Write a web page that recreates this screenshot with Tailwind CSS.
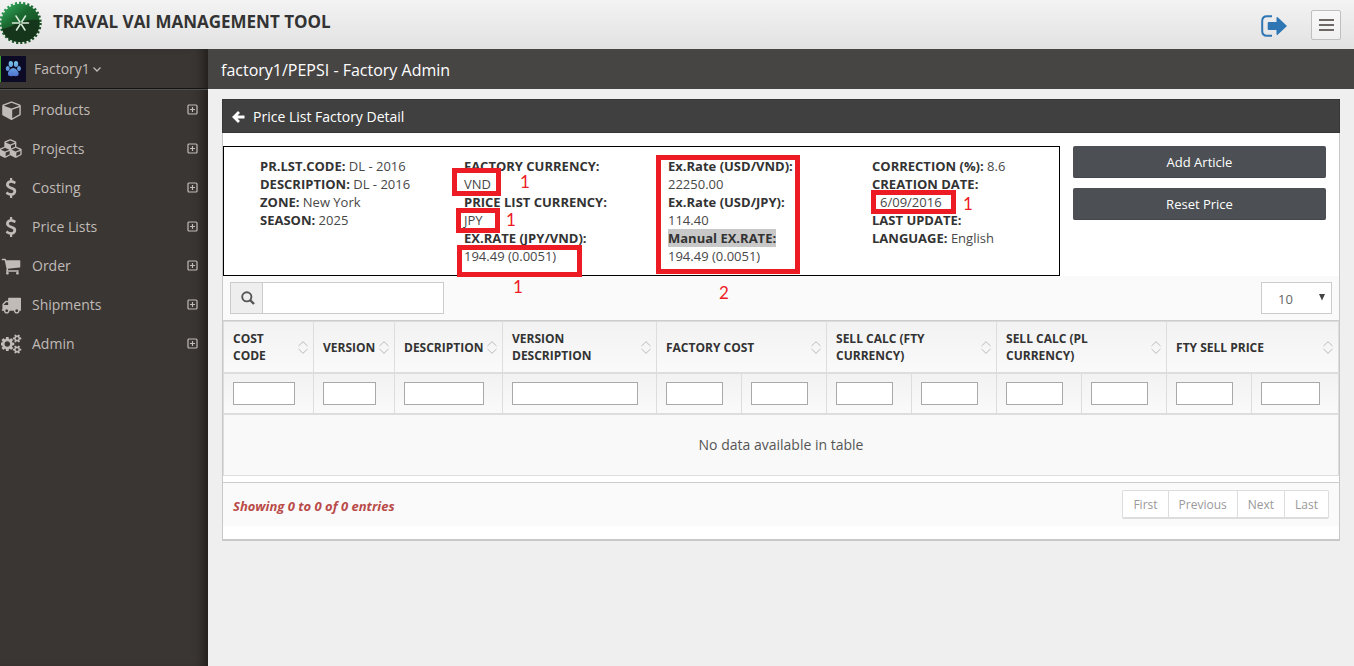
<!DOCTYPE html>
<html lang="en">
<head>
<meta charset="utf-8">
<title>Traval Vai Management Tool</title>
<script src="https://cdn.jsdelivr.net/npm/@tailwindcss/browser@4"></script>
</head>
<body class="flex min-h-screen flex-col bg-[#efefef] font-['Open_Sans','Noto_Sans',sans-serif] text-[13px] leading-[18px] text-[#333]">

<svg class="hidden" aria-hidden="true">
  <symbol id="plus" viewBox="0 0 11 11"><rect x="1" y="1" width="9" height="9" rx="1" fill="none" stroke="currentColor" stroke-width="1.200"/><path d="M3 5.500h5M5.500 3v5" stroke="currentColor" stroke-width="1.200"/></symbol>
  <symbol id="sort" viewBox="0 0 10 13"><path d="M.5 5L5 .7 9.500 5M.5 8L5 12.300 9.500 8" fill="none" stroke="#bbb"/></symbol>
  <symbol id="usd" viewBox="384 0 1024 1792"><path fill="currentColor" d="M1362 1185q0 153-99.500 263.500t-258.500 136.500v175q0 14-9 23t-23 9h-135q-13 0-22.500-9.500t-9.500-22.500v-175q-66-9-127.500-31t-101.500-44.500-74-48-46.500-37.500-17.500-18q-17-21-2-41l103-135q7-10 23-12 15-2 24 9l2 2q113 99 243 125 37 8 74 8 81 0 142.500-43t61.500-122q0-28-15-53t-33.500-42-58.500-37.500-66-32-80-32.500q-39-16-61.500-25t-61.500-26.500-62.500-31-56.500-35.500-53.500-42.500-43.500-49-35.500-58-21-66.500-8.500-78q0-138 98-242t255-134v-180q0-13 9.500-22.500t22.500-9.500h135q14 0 23 9t9 23v176q57 6 110.500 23t87 33.500 63.500 37.500 39 29 15 14q17 18 5 38l-81 146q-8 15-23 16-14 3-27-7-3-3-14.500-12t-39-26.500-58.500-32-74.500-26-85.500-11.500q-95 0-155 43t-60 111q0 26 8.500 48t29.500 41.500 39.500 33 56 31 60.500 27 70 27.500q53 20 81 31.500t76 35 75.500 42.500 62 50 53 63.500 31.500 76.500 13 94z"/></symbol>
</svg>

<header class="flex h-[49px] items-center justify-between bg-linear-to-b from-[#f3f3f3] to-[#e2e2e2] pr-[13px]">
  <div class="flex items-center gap-[11px] pb-[6px]">
    <svg class="h-[44px] w-[42px]" viewBox="0 0 42 44">
      <defs><linearGradient id="disk" gradientUnits="userSpaceOnUse" x1="5" y1="3" x2="32" y2="40"><stop offset="0" stop-color="#34b062"/><stop offset=".4" stop-color="#1b6a31"/><stop offset="1" stop-color="#14451d"/></linearGradient></defs>
      <circle cx="20.500" cy="23" r="19.300" fill="url(#disk)"/>
      <circle cx="20.500" cy="23" r="19.700" fill="none" stroke="url(#disk)" stroke-width="3" stroke-dasharray="2.100 2.026"/>
      <path d="M2 29C12 28 20 18 39 20C41 33 31 42 20 42C11 42 4 37 2 29Z" fill="#15361a"/>
      <path d="M12.500 23h16M16 16l9 14M25.500 16l-9 14" stroke="#d6ead8" stroke-width="1.500" stroke-linecap="round"/>
      <circle cx="20.700" cy="23" r="1.200" fill="#5c8f63"/>
    </svg>
    <h1 class="text-[17px] leading-6 font-bold text-[#333]">TRAVAL VAI MANAGEMENT TOOL</h1>
  </div>
  <div class="flex items-center gap-6">
    <a href="#" aria-label="Sign out" class="pt-[2px]"><svg class="h-[22px] w-[26px]" viewBox="0 0 26 22"><path d="M11 1.200H6Q1.200 1.200 1.200 6v10Q1.200 20.800 6 20.800h5" fill="none" stroke="#2f76b5" stroke-width="2"/><path d="M7.500 7h8V2.400q.3-.8 1.200-.2l8.800 8.200q.6.6 0 1.200l-8.800 8.200q-.9.6-1.200-.2V15h-8q-.8 0-.8-.8V7.800q0-.8.8-.8z" fill="#2f76b5"/></svg></a>
    <button type="button" aria-label="Collapse menu" class="flex size-[30px] items-center justify-center rounded-[2px] border border-[#bfbfbf] bg-linear-to-b from-[#f8f8f8] to-[#f0f0f0]"><svg class="h-3 w-[15px]" viewBox="0 0 15 12"><path d="M0 1h15M0 6h15M0 11h15" stroke="#6e6866" stroke-width="2"/></svg></button>
  </div>
</header>

<div class="flex flex-1">
  <aside class="w-[208px] shrink-0 bg-[#3a3633] text-[14px] text-[#c0bbb7] shadow-[inset_-12px_0_12px_-8px_#1f1c1a]">
    <a href="#" class="flex h-[41px] items-center border-b border-[#525151] shadow-[inset_0_-1px_0_#141312]">
      <svg class="size-[26px]" viewBox="0 0 26 26"><defs><linearGradient id="paw" x1="0" y1="0" x2="0" y2="26" gradientUnits="userSpaceOnUse"><stop offset=".2" stop-color="#77c4ea"/><stop offset=".8" stop-color="#4d6fd0"/></linearGradient></defs><path d="M0 0h26v26H0z" fill="#0d0a26"/><path d="M0 0h1v26H0z" fill="#3ba32c"/><g fill="url(#paw)"><ellipse cx="10.800" cy="8" rx="2.200" ry="3"/><ellipse cx="16" cy="8" rx="2.200" ry="3"/><ellipse cx="7.700" cy="12.500" rx="1.900" ry="2.500"/><ellipse cx="19" cy="12.500" rx="1.900" ry="2.500"/><path d="M13.300 12c2.500 0 5.400 3.400 5.400 5.700 0 3-3 2.400-5.400 2.400s-5.400.6-5.400-2.400c0-2.300 2.900-5.700 5.400-5.700z"/></g></svg>
      <span class="ml-2">Factory1</span>
      <svg class="ml-[3px] h-[5px] w-2" viewBox="0 0 8 5"><path d="M.5.5L4 4 7.500.5" fill="none" stroke="currentColor" stroke-width="1.300"/></svg>
    </a>
    <nav class="flex flex-col">
      <a href="#" class="flex h-[39px] items-center pr-[10px]"><span class="flex w-[22px] justify-center"><svg class="h-5 w-[19px] shrink-0" viewBox="0 0 1664 1792"><path fill="currentColor" d="M896 1629l640-349v-636l-640 233v752zm-64-865l698-254-698-254-698 254zm832-252v768q0 35-18 65t-49 47l-704 384q-28 16-61 16t-61-16l-704-384q-31-17-49-47t-18-65v-768q0-40 23-73t61-47l704-256q22-8 44-8t44 8l704 256q38 14 61 47t23 73z"/></svg></span><span class="ml-[10px] flex-1">Products</span><svg class="size-[11px]"><use href="#plus"/></svg></a>
      <a href="#" class="flex h-[39px] items-center pr-[10px]"><span class="flex w-[22px] justify-center"><svg class="h-[19px] w-6 shrink-0" viewBox="0 0 2304 1792"><path fill="currentColor" d="M640 1632l384-192v-314l-384 164v342zm-64-454l404-173-404-173-404 173zm1088 454l384-192v-314l-384 164v342zm-64-454l404-173-404-173-404 173zm-448-293l384-165v-266l-384 164v267zm-64-379l441-189-441-189-441 189zm1088 518v416q0 36-19 67t-52 47l-448 224q-25 14-57 14t-57-14l-448-224q-4-2-7-4-2 2-7 4l-448 224q-25 14-57 14t-57-14l-448-224q-33-16-52-47t-19-67v-416q0-38 21.500-70t56.500-48l434-186v-400q0-38 21.500-70t56.500-48l448-192q23-10 50-10t50 10l448 192q35 16 56.500 48t21.500 70v400l434 186q36 16 57 48t21 70z"/></svg></span><span class="ml-[10px] flex-1">Projects</span><svg class="size-[11px]"><use href="#plus"/></svg></a>
      <a href="#" class="flex h-[39px] items-center pr-[10px]"><span class="flex w-[22px] justify-center"><svg class="h-5 w-3 shrink-0"><use href="#usd"/></svg></span><span class="ml-[10px] flex-1">Costing</span><svg class="size-[11px]"><use href="#plus"/></svg></a>
      <a href="#" class="flex h-[39px] items-center pr-[10px]"><span class="flex w-[22px] justify-center"><svg class="h-5 w-3 shrink-0"><use href="#usd"/></svg></span><span class="ml-[10px] flex-1">Price Lists</span><svg class="size-[11px]"><use href="#plus"/></svg></a>
      <a href="#" class="flex h-[39px] items-center pr-[10px]"><span class="flex w-[22px] justify-center"><svg class="size-5 shrink-0" viewBox="0 0 1792 1792"><path fill="currentColor" d="M704 1536q0 52-38 90t-90 38-90-38-38-90 38-90 90-38 90 38 38 90zm896 0q0 52-38 90t-90 38-90-38-38-90 38-90 90-38 90 38 38 90zm128-1088v512q0 24-16.500 42.500t-40.500 21.500l-1044 122q13 60 13 70 0 16-24 64h920q26 0 45 19t19 45-19 45-45 19h-1024q-26 0-45-19t-19-45q0-11 8-31.500t16-36 21.500-40 15.500-29.500l-177-823h-204q-26 0-45-19t-19-45 19-45 45-19h256q16 0 28.500 6.500t19.500 15.500 13 24.500 8 26 5.500 29.500 4.500 26h1201q26 0 45 19t19 45z"/></svg></span><span class="ml-[10px] flex-1">Order</span><svg class="size-[11px]"><use href="#plus"/></svg></a>
      <a href="#" class="flex h-[39px] items-center pr-[10px]"><span class="flex w-[22px] justify-center"><svg class="size-5 shrink-0" viewBox="0 0 1792 1792"><path fill="currentColor" d="M640 1408q0-52-38-90t-90-38-90 38-38 90 38 90 90 38 90-38 38-90zm-384-512h384v-256h-158q-13 0-22 9l-195 195q-9 9-9 22v30zm1280 512q0-52-38-90t-90-38-90 38-38 90 38 90 90 38 90-38 38-90zm256-1088v1024q0 15-4 26.500t-13.500 18.500-16.500 11.500-23.500 6-22.500 2-25.500 0-22.500-.5q0 106-75 181t-181 75-181-75-75-181h-384q0 106-75 181t-181 75-181-75-75-181h-64q-3 0-22.500.5t-25.500 0-22.500-2-23.500-6-16.500-11.500-13.500-18.500-4-26.500q0-26 19-45t45-19v-320q0-8-.5-35t0-38 2.500-34.500 6.500-37 14-30.500 22.500-30l198-198q19-19 50.500-32t58.500-13h160v-192q0-26 19-45t45-19h1024q26 0 45 19t19 45z"/></svg></span><span class="ml-[10px] flex-1">Shipments</span><svg class="size-[11px]"><use href="#plus"/></svg></a>
      <a href="#" class="flex h-[39px] items-center pr-[10px]"><span class="flex w-[22px] justify-center"><svg class="h-5 w-[21px] shrink-0" viewBox="0 0 1920 1792"><path fill="currentColor" d="M832 896q0-106-75-181t-181-75-181 75-75 181 75 181 181 75 181-75 75-181zm768 512q0-52-38-90t-90-38-90 38-38 90q0 53 37.500 90.500t90.500 37.500 90.500-37.500 37.500-90.500zm0-1024q0-52-38-90t-90-38-90 38-38 90q0 53 37.500 90.500t90.500 37.500 90.500-37.500 37.500-90.500zm-384 421v185q0 10-7 19.500t-16 10.500l-155 24q-11 35-32 76 34 48 90 115 7 11 7 20 0 12-7 19-23 30-82.500 89.500t-78.500 59.500q-11 0-21-7l-115-90q-37 19-77 31-11 108-23 155-7 24-30 24h-186q-11 0-20-7.500t-10-17.500l-23-153q-34-10-75-31l-118 89q-7 7-20 7-11 0-21-8-144-133-144-160 0-9 7-19 10-14 41-53t47-61q-23-44-35-82l-152-24q-10-1-17-9.500t-7-19.500v-185q0-10 7-19.500t16-10.500l155-24q11-35 32-76-34-48-90-115-7-11-7-20 0-12 7-20 22-30 82-89t79-59q11 0 21 7l115 90q34-18 77-32 11-108 23-154 7-24 30-24h186q11 0 20 7.500t10 17.500l23 153q34 10 75 31l118-89q8-7 20-7 11 0 21 8 144 133 144 160 0 8-7 19-12 16-42 54t-45 60q23 48 34 82l152 23q10 2 17 10.500t7 19.500zm640 533v140q0 16-149 31-12 27-30 52 51 113 51 138 0 4-4 7-122 71-124 71-8 0-46-47t-52-68q-20 2-30 2t-30-2q-14 21-52 68t-46 47q-2 0-124-71-4-3-4-7 0-25 51-138-18-25-30-52-149-15-149-31v-140q0-16 149-31 13-29 30-52-51-113-51-138 0-4 4-7 4-2 35-20t59-34 30-16q8 0 46 46.500t52 67.500q20-2 30-2t30 2q51-71 92-112l6-2q4 0 124 70 4 3 4 7 0 25-51 138 17 23 30 52 149 15 149 31zm0-1024v140q0 16-149 31-12 27-30 52 51 113 51 138 0 4-4 7-122 71-124 71-8 0-46-47t-52-68q-20 2-30 2t-30-2q-14 21-52 68t-46 47q-2 0-124-71-4-3-4-7 0-25 51-138-18-25-30-52-149-15-149-31v-140q0-16 149-31 13-29 30-52-51-113-51-138 0-4 4-7 4-2 35-20t59-34 30-16q8 0 46 46.500t52 67.500q20-2 30-2t30 2q51-71 92-112l6-2q4 0 124 70 4 3 4 7 0 25-51 138 17 23 30 52 149 15 149 31z"/></svg></span><span class="ml-[10px] flex-1">Admin</span><svg class="size-[11px]"><use href="#plus"/></svg></a>
    </nav>
  </aside>

  <main class="min-w-0 flex-1">
    <div class="flex h-10 items-center bg-[#474544] px-[13px] pt-px text-[16px] text-white">factory1/PEPSI - Factory Admin</div>
    <section class="mx-[14px] mt-[10px]">
      <div class="flex h-[34px] items-center border border-[#363636] bg-[#404040] px-[9px] pt-[2px] text-[14px] text-white">
        <a href="#" aria-label="Back" class="mr-2"><svg class="h-3 w-[13px]" viewBox="0 0 13 12"><path d="M7 1L2 6l5 5M2 6h10.500" fill="none" stroke="#fff" stroke-width="2.800"/></svg></a>
        <h2>Price List Factory Detail</h2>
      </div>
      <div class="border-x border-b-2 border-[#c8c8c8] bg-white pt-[13px] pb-[13px]">
        <div class="flex">
          <div class="relative grid h-[130px] w-3/4 grid-cols-[1fr_1fr_1fr_187px] border border-black py-[10px] pl-9 text-[#484848] [&_b]:text-[#333]">
            <div>
              <p><b>PR.LST.CODE:</b> DL - 2016</p>
              <p><b>DESCRIPTION:</b> DL - 2016</p>
              <p><b>ZONE:</b> New York</p>
              <p><b>SEASON:</b> 2025</p>
            </div>
            <div>
              <p><b>FACTORY CURRENCY:</b></p><p>VND</p>
              <p><b>PRICE LIST CURRENCY:</b></p><p>JPY</p>
              <p><b>EX.RATE (JPY/VND):</b></p><p>194.49 (0.0051)</p>
            </div>
            <div>
              <p><b>Ex.Rate (USD/VND):</b></p><p>22250.00</p>
              <p><b>Ex.Rate (USD/JPY):</b></p><p>114.40</p>
              <p><b class="inline-block bg-[#c8c8c8]">Manual EX.RATE:</b></p><p>194.49 (0.0051)</p>
            </div>
            <div>
              <p><b>CORRECTION (%):</b> 8.6</p>
              <p><b>CREATION DATE:</b></p><p class="pl-2">6/09/2016</p>
              <p><b>LAST UPDATE:</b></p>
              <p><b>LANGUAGE:</b> English</p>
            </div>
            <!-- review marks -->
            <div class="absolute top-[21px] left-[228px] h-7 w-[49px] border-5 border-[#ed1c24]"></div>
            <div class="absolute top-[61px] left-[232px] h-[25px] w-11 border-5 border-[#ed1c24]"></div>
            <div class="absolute top-[98px] left-[233px] h-8 w-[125px] border-5 border-[#ed1c24]"></div>
            <div class="absolute top-2 left-[432px] h-[119px] w-36 border-5 border-[#ed1c24]"></div>
            <div class="absolute top-[43px] left-[647px] h-6 w-[85px] border-5 border-[#ed1c24]"></div>
            <div class="absolute top-[28px] left-[296px] font-['Lato'] text-[17px] leading-[14px] text-[#ed1c24]">1</div>
            <div class="absolute top-[66px] left-[282px] font-['Lato'] text-[17px] leading-[14px] text-[#ed1c24]">1</div>
            <div class="absolute top-[133px] left-[289px] font-['Lato'] text-[17px] leading-[14px] text-[#ed1c24]">1</div>
            <div class="absolute top-[139px] left-[495px] font-['Lato'] text-[17px] leading-[14px] text-[#ed1c24]">2</div>
            <div class="absolute top-[50px] left-[739px] font-['Lato'] text-[17px] leading-[14px] text-[#ed1c24]">1</div>
          </div>
          <div class="flex w-1/4 flex-col gap-[10px] px-[13px]">
            <button type="button" class="h-8 rounded-[2px] border-b border-[#43474b] bg-[#4c4f53] text-white">Add Article</button>
            <button type="button" class="h-8 rounded-[2px] border-b border-[#43474b] bg-[#4c4f53] text-white">Reset Price</button>
          </div>
        </div>

        <div class="flex items-start justify-between border-b border-[#ccc] bg-[#fafafa] p-[6px_7px]">
          <label class="flex h-8 border border-[#ccc]">
            <span class="flex w-8 items-center justify-center border-r border-[#ccc] bg-[#eee] pl-[2px]"><svg class="size-[14px]" viewBox="0 0 14 14"><circle cx="5.800" cy="5.800" r="4.600" fill="none" stroke="#555" stroke-width="1.900"/><path d="M9 9l4 4" stroke="#555" stroke-width="2.400"/></svg></span>
            <input type="search" aria-label="Search" class="w-[180px] bg-white px-3 outline-none">
          </label>
          <div class="relative">
            <select aria-label="Entries per page" class="h-8 w-[71px] appearance-none border border-[#ccc] bg-white pt-[2px] pl-4 text-[13px] text-[#666]"><option>10</option></select>
            <svg class="pointer-events-none absolute top-3 right-[7px] h-[7px] w-[6px]" viewBox="0 0 6 7"><path d="M0 0h6L3 6.500z" fill="#444"/></svg>
          </div>
        </div>

        <table class="w-full table-fixed border-separate border-spacing-0 border-t border-l border-[#ddd] text-left">
          <colgroup><col class="w-[90px]"><col class="w-[81px]"><col class="w-[108px]"><col class="w-[154px]"><col class="w-[85px]"><col class="w-[85px]"><col class="w-[85px]"><col class="w-[85px]"><col class="w-[85px]"><col class="w-[85px]"><col class="w-[85px]"><col></colgroup>
          <thead class="text-[12px] leading-[17px]">
            <tr class="h-[52px]">
              <th class="border-r border-b-2 border-[#ddd] bg-linear-to-b from-[#f2f2f2] to-[#fafafa] py-0 pr-[5px] pl-[9px]"><div class="flex items-center justify-between"><span>COST<br>CODE</span><svg class="h-[13px] w-[10px] shrink-0"><use href="#sort"/></svg></div></th>
              <th class="border-r border-b-2 border-[#ddd] bg-linear-to-b from-[#f2f2f2] to-[#fafafa] py-0 pr-[5px] pl-[9px]"><div class="flex items-center justify-between"><span>VERSION</span><svg class="h-[13px] w-[10px] shrink-0"><use href="#sort"/></svg></div></th>
              <th class="border-r border-b-2 border-[#ddd] bg-linear-to-b from-[#f2f2f2] to-[#fafafa] py-0 pr-[5px] pl-[9px]"><div class="flex items-center justify-between"><span>DESCRIPTION</span><svg class="h-[13px] w-[10px] shrink-0"><use href="#sort"/></svg></div></th>
              <th class="border-r border-b-2 border-[#ddd] bg-linear-to-b from-[#f2f2f2] to-[#fafafa] py-0 pr-[5px] pl-[9px]"><div class="flex items-center justify-between"><span>VERSION<br>DESCRIPTION</span><svg class="h-[13px] w-[10px] shrink-0"><use href="#sort"/></svg></div></th>
              <th colspan="2" class="border-r border-b-2 border-[#ddd] bg-linear-to-b from-[#f2f2f2] to-[#fafafa] py-0 pr-[5px] pl-[9px]"><div class="flex items-center justify-between"><span>FACTORY COST</span><svg class="h-[13px] w-[10px] shrink-0"><use href="#sort"/></svg></div></th>
              <th colspan="2" class="border-r border-b-2 border-[#ddd] bg-linear-to-b from-[#f2f2f2] to-[#fafafa] py-0 pr-[5px] pl-[9px]"><div class="flex items-center justify-between"><span>SELL CALC (FTY<br>CURRENCY)</span><svg class="h-[13px] w-[10px] shrink-0"><use href="#sort"/></svg></div></th>
              <th colspan="2" class="border-r border-b-2 border-[#ddd] bg-linear-to-b from-[#f2f2f2] to-[#fafafa] py-0 pr-[5px] pl-[9px]"><div class="flex items-center justify-between"><span>SELL CALC (PL<br>CURRENCY)</span><svg class="h-[13px] w-[10px] shrink-0"><use href="#sort"/></svg></div></th>
              <th colspan="2" class="border-r border-b-2 border-[#ddd] bg-linear-to-b from-[#f2f2f2] to-[#fafafa] py-0 pr-[5px] pl-[9px]"><div class="flex items-center justify-between"><span>FTY SELL PRICE</span><svg class="h-[13px] w-[10px] shrink-0"><use href="#sort"/></svg></div></th>
            </tr>
            <tr class="h-[41px]">
              <td class="border-r border-b-2 border-[#ddd] bg-linear-to-b from-[#f2f2f2] to-[#fafafa] py-0 pr-[18px] pl-[9px]"><input aria-label="Filter cost code" class="block h-[23px] w-full border border-[#a9a9a9] bg-white px-1"></td>
              <td class="border-r border-b-2 border-[#ddd] bg-linear-to-b from-[#f2f2f2] to-[#fafafa] py-0 pr-[18px] pl-[9px]"><input aria-label="Filter version" class="block h-[23px] w-full border border-[#a9a9a9] bg-white px-1"></td>
              <td class="border-r border-b-2 border-[#ddd] bg-linear-to-b from-[#f2f2f2] to-[#fafafa] py-0 pr-[18px] pl-[9px]"><input aria-label="Filter description" class="block h-[23px] w-full border border-[#a9a9a9] bg-white px-1"></td>
              <td class="border-r border-b-2 border-[#ddd] bg-linear-to-b from-[#f2f2f2] to-[#fafafa] py-0 pr-[18px] pl-[9px]"><input aria-label="Filter version description" class="block h-[23px] w-full border border-[#a9a9a9] bg-white px-1"></td>
              <td class="border-r border-b-2 border-[#ddd] bg-linear-to-b from-[#f2f2f2] to-[#fafafa] py-0 pr-[18px] pl-[9px]"><input aria-label="Filter factory cost" class="block h-[23px] w-full border border-[#a9a9a9] bg-white px-1"></td>
              <td class="border-r border-b-2 border-[#ddd] bg-linear-to-b from-[#f2f2f2] to-[#fafafa] py-0 pr-[18px] pl-[9px]"><input aria-label="Filter factory cost currency" class="block h-[23px] w-full border border-[#a9a9a9] bg-white px-1"></td>
              <td class="border-r border-b-2 border-[#ddd] bg-linear-to-b from-[#f2f2f2] to-[#fafafa] py-0 pr-[18px] pl-[9px]"><input aria-label="Filter factory sell calculation" class="block h-[23px] w-full border border-[#a9a9a9] bg-white px-1"></td>
              <td class="border-r border-b-2 border-[#ddd] bg-linear-to-b from-[#f2f2f2] to-[#fafafa] py-0 pr-[18px] pl-[9px]"><input aria-label="Filter factory sell calculation currency" class="block h-[23px] w-full border border-[#a9a9a9] bg-white px-1"></td>
              <td class="border-r border-b-2 border-[#ddd] bg-linear-to-b from-[#f2f2f2] to-[#fafafa] py-0 pr-[18px] pl-[9px]"><input aria-label="Filter price list sell calculation" class="block h-[23px] w-full border border-[#a9a9a9] bg-white px-1"></td>
              <td class="border-r border-b-2 border-[#ddd] bg-linear-to-b from-[#f2f2f2] to-[#fafafa] py-0 pr-[18px] pl-[9px]"><input aria-label="Filter price list sell calculation currency" class="block h-[23px] w-full border border-[#a9a9a9] bg-white px-1"></td>
              <td class="border-r border-b-2 border-[#ddd] bg-linear-to-b from-[#f2f2f2] to-[#fafafa] py-0 pr-[18px] pl-[9px]"><input aria-label="Filter factory sell price" class="block h-[23px] w-full border border-[#a9a9a9] bg-white px-1"></td>
              <td class="border-r border-b-2 border-[#ddd] bg-linear-to-b from-[#f2f2f2] to-[#fafafa] py-0 pr-[18px] pl-[9px]"><input aria-label="Filter factory sell price currency" class="block h-[23px] w-full border border-[#a9a9a9] bg-white px-1"></td>
            </tr>
          </thead>
          <tbody>
            <tr class="h-[61px]"><td colspan="12" class="border-r border-b border-[#ddd] bg-[#f9f9f9] p-0 text-center text-[14px] text-[#555]">No data available in table</td></tr>
          </tbody>
        </table>

        <div class="mt-[6px] flex h-11 items-center justify-between border-t border-[#ccc] bg-[#fafafa] px-[10px]">
          <p class="pt-[2px] font-bold text-[#b94a48] italic">Showing 0 to 0 of 0 entries</p>
          <div class="flex h-[29px] divide-x divide-[#ddd] rounded-[2px] border border-b-2 border-[#ddd] bg-white text-[12px] text-[#999]">
            <button type="button" class="px-[10px] pt-[2px]">First</button>
            <button type="button" class="px-[10px] pt-[2px]">Previous</button>
            <button type="button" class="px-[10px] pt-[2px]">Next</button>
            <button type="button" class="px-[10px] pt-[2px]">Last</button>
          </div>
        </div>
      </div>
    </section>
  </main>
</div>
</body>
</html>
